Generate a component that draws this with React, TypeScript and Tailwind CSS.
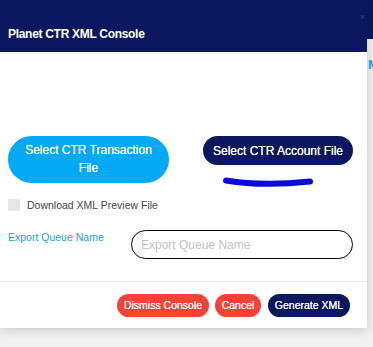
export default function App() {
  const font = { fontFamily: '"Liberation Sans", Arial, sans-serif' };

  return (
    <div className="relative w-[373px] h-[347px] overflow-hidden bg-[#f1f1f1]" style={font}>
      {/* page behind the console */}
      <div className="h-[39px] bg-[#0b185f]" />
      <div className="pl-[368px] pt-[16px] text-[13px] font-bold text-[#1ba1e2] whitespace-nowrap">MENU</div>

      {/* console modal */}
      <div className="absolute left-0 top-0 w-[367px] bg-white shadow-[0_2px_10px_rgba(0,0,0,0.18)]">
        <div className="relative h-[52px] bg-[#0b185f] px-2 pt-[27px]">
          <h1 className="text-[12px] leading-[15px] font-bold tracking-[-0.3px] text-white">Planet CTR XML Console</h1>
          <span className="absolute right-[2px] top-[13px] text-[9px] leading-none text-[#34437f]">×</span>
        </div>

        <div className="px-2 pt-[84px] pb-[22px]">
          <div className="flex items-start">
            <button className="w-[161px] h-[47px] rounded-full bg-[#03a9f4] text-white text-[12px] leading-[17.5px] px-4 [text-shadow:0_0_0.4px_white]">
              Select CTR Transaction File
            </button>
            <div className="ml-[34px] flex flex-col">
              <button className="w-[150px] h-[29px] rounded-full bg-[#0b185f] text-white text-[12px] leading-none [text-shadow:0_0_0.4px_white]">
                Select CTR Account File
              </button>
              <svg className="ml-[17px] mt-[10px] mb-[-7px]" width="96" height="15" viewBox="0 0 96 15">
                <path d="M6 5.5 C 30 9.5, 62 9.5, 90 6.5" fill="none" stroke="#0a0ae0" strokeWidth="6" strokeLinecap="round" />
              </svg>
            </div>
          </div>

          <div className="mt-[16px] flex items-center h-[12px]">
            <span className="w-[12px] h-[12px] rounded-[2px] bg-[#e6e6e6]" />
            <span className="ml-[7px] text-[10.5px] leading-none text-[#444]">Download XML Preview File</span>
          </div>

          <div className="mt-[19px] flex items-start">
            <label className="w-[123px] shrink-0 mt-[1px] text-[10.5px] leading-[12px] text-[#1a9fdc]">Export Queue Name</label>
            <input
              placeholder="Export Queue Name"
              className="w-[222px] h-[29px] rounded-full border border-black px-[9px] text-[12px] outline-none placeholder:text-[#c2c2c2]"
              style={font}
            />
          </div>
        </div>

        <div className="border-t border-[#e8e8e8] pt-[12px] pb-[11px] pr-[17px] flex justify-end">
          <button className="w-[92px] h-[23px] rounded-full bg-[#f44336] text-white text-[10.5px] leading-none [text-shadow:0_0_0.4px_white]">
            Dismiss Console
          </button>
          <button className="ml-[6px] w-[46px] h-[23px] rounded-full bg-[#f44336] text-white text-[10.5px] leading-none [text-shadow:0_0_0.4px_white]">
            Cancel
          </button>
          <button className="ml-[7px] w-[82px] h-[23px] rounded-full bg-[#0b185f] text-white text-[10.5px] leading-none [text-shadow:0_0_0.4px_white]">
            Generate XML
          </button>
        </div>
      </div>
    </div>
  );
}
